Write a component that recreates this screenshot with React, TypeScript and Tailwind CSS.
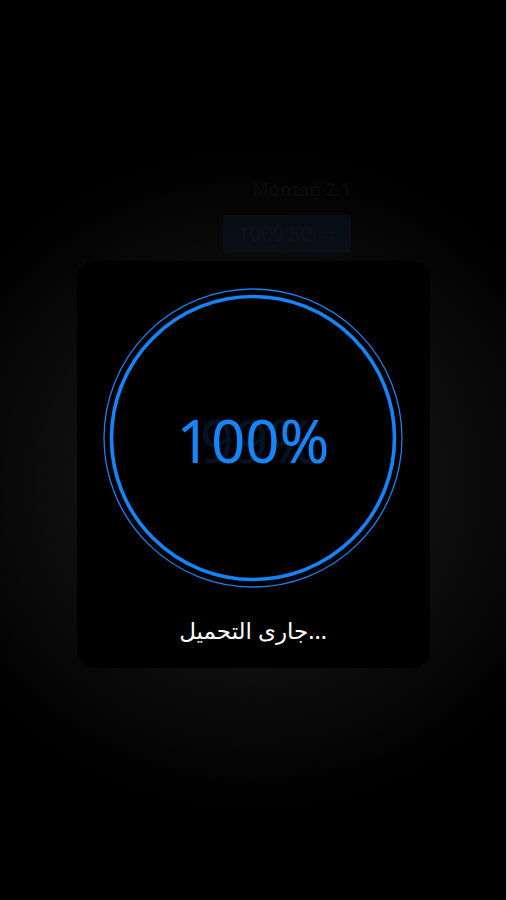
import React from "react";

const FONT = { fontFamily: '"Noto Sans", "DejaVu Sans", sans-serif' };

function ProgressRing({ percent }: { percent: number }) {
  return (
    <div className="relative w-[304px] h-[304px]">
      <svg width="304" height="304" viewBox="0 0 304 304" className="absolute inset-0">
        <circle cx="152" cy="152" r="149" fill="none" stroke="#1a7ff0" strokeWidth="1.3" />
        <circle cx="152" cy="152" r="141.5" fill="none" stroke="#1584fa" strokeWidth="3.6" />
      </svg>
      <div className="absolute inset-0 flex items-center justify-center">
        <span
          className="absolute text-[60px] leading-none text-[#0b3158] opacity-40 translate-x-[6px] pt-[4px]"
          style={FONT}
        >
          99%
        </span>
        <span className="relative text-[60px] leading-none text-[#1585fb] pt-[4px]" style={FONT}>
          {percent}%
        </span>
      </div>
    </div>
  );
}

export default function App() {
  return (
    <div className="relative w-full h-[900px] bg-black overflow-hidden" style={FONT}>
      {/* page underneath the overlay */}
      <div className="flex flex-col items-end pt-[176px] pr-[156px] gap-3">
        <div className="text-[18px] font-semibold text-[#070707]">Montag 2.1</div>
        <div className="w-[128px] h-[38px] rounded bg-[#030b15] flex items-center justify-center text-[20px] text-[#0b1119]">
          1000 50 ▭
        </div>
      </div>

      {/* loading overlay */}
      <div className="absolute inset-0 flex justify-center pt-[261px]">
        <div className="absolute left-[-120px] right-[-120px] top-[120px] h-[720px] bg-[radial-gradient(ellipse_at_center,rgba(34,34,34,0.9)_0%,rgba(20,20,20,0.7)_35%,rgba(0,0,0,0)_65%)]" />
        <div className="relative ml-[-1px] w-[353px] h-[407px] rounded-[18px] bg-black flex flex-col items-center pt-[25px]">
          <ProgressRing percent={100} />
          <div className="mt-[29px] text-[23px] text-white leading-none">
            جارى التحميل...
          </div>
        </div>
      </div>

      <div className="absolute top-0 right-0 w-px h-full bg-[#cfcfcf]" />
    </div>
  );
}
